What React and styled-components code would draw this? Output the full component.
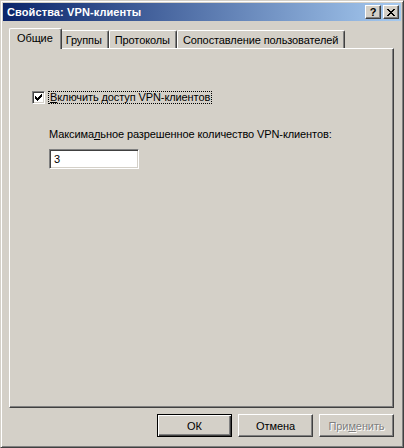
import React from 'react'
import styled, { createGlobalStyle, css } from 'styled-components'

const GlobalStyle = createGlobalStyle`
  html, body {
    margin: 0;
    padding: 0;
    background: #d4d0c8;
  }
  * {
    box-sizing: border-box;
  }
`

const raised = css`
  border-style: solid;
  border-width: 1px;
  border-color: #ffffff #404040 #404040 #ffffff;
  box-shadow: inset -1px -1px #808080, inset 1px 1px #d4d0c8;
`

const sunken = css`
  background: #ffffff;
  border-style: solid;
  border-width: 1px;
  border-color: #808080 #ffffff #ffffff #808080;
  box-shadow: inset 1px 1px #404040, inset -1px -1px #d4d0c8;
`

const Window = styled.div`
  width: 404px;
  height: 448px;
  display: flex;
  flex-direction: column;
  padding: 2px;
  background: #d4d0c8;
  border-style: solid;
  border-width: 1px;
  border-color: #d4d0c8 #404040 #404040 #d4d0c8;
  box-shadow: inset 1px 1px #ffffff, inset -1px -1px #808080;
  font-family: "Liberation Sans", Arial, sans-serif;
  font-size: 11px;
  letter-spacing: -0.1px;
  color: #000;
`

const TitleBar = styled.div`
  height: 18px;
  display: flex;
  align-items: center;
  padding: 0 2px;
  background: linear-gradient(to right, #0a246a 0%, #a6caf0 100%);
`

const Title = styled.div`
  flex: 1;
  padding-left: 2px;
  color: #ffffff;
  font-weight: bold;
  font-size: 11px;
  letter-spacing: 0.1px;
`

const CaptionButton = styled.div`
  ${raised};
  width: 16px;
  height: 14px;
  margin-left: ${p => p.$gap || 0}px;
  background: #d4d0c8;
  display: flex;
  align-items: center;
  justify-content: center;
  font-weight: bold;
  font-size: 11px;
  line-height: 1;
`

const Body = styled.div`
  flex: 1;
  display: flex;
  flex-direction: column;
  padding: 7px 7px 8px 6px;
`

const TabRow = styled.div`
  height: 20px;
  display: flex;
  align-items: flex-end;
  padding-left: 2px;
`

const Tab = styled.div`
  height: 18px;
  padding: 1px 6px 0 5px;
  display: flex;
  align-items: center;
  justify-content: center;
  background: #d4d0c8;
  border-top: 1px solid #ffffff;
  border-left: 1px solid #ffffff;
  border-right: 1px solid #404040;
  border-radius: 2px 2px 0 0;
  box-shadow: inset -1px 0 #808080;
  white-space: nowrap;

  ${p => p.$active && css`
    position: relative;
    z-index: 1;
    height: 21px;
    margin: 0 -2px -1px -2px;
    padding: 0 8px 2px 7px;
  `}
`

const Panel = styled.div`
  flex: 1;
  display: flex;
  flex-direction: column;
  padding: 42px 20px 0 22px;
  border-style: solid;
  border-width: 1px;
  border-color: #ffffff #404040 #404040 #ffffff;
  box-shadow: inset -1px -1px #808080;
`

const CheckRow = styled.label`
  display: flex;
  align-items: center;
  gap: 3px;
`

const CheckBox = styled.span`
  ${sunken};
  width: 13px;
  height: 13px;
  display: flex;
  align-items: center;
  justify-content: center;
`

const FocusLabel = styled.span`
  border: 1px dotted #000;
  padding: 0 1px;
  line-height: 11px;
  height: 13px;
`

const Key = styled.span`
  text-decoration: underline;
`

const Group = styled.div`
  margin: 24px 0 0 17px;
  display: flex;
  flex-direction: column;
  gap: 9px;
`

const Field = styled.div`
  ${sunken};
  width: 90px;
  height: 20px;
  padding: 3px 4px;
  line-height: 13px;
`

const Footer = styled.div`
  height: 23px;
  margin-top: 6px;
  display: flex;
  justify-content: flex-end;
  gap: 6px;
`

const Button = styled.div`
  ${raised};
  width: 75px;
  height: 23px;
  display: flex;
  align-items: center;
  justify-content: center;
  background: #d4d0c8;

  ${p => p.$default && css`
    border-color: #000;
    box-shadow: inset 1px 1px #ffffff, inset -1px -1px #404040, inset -2px -2px #808080;
  `}

  ${p => p.$disabled && css`
    color: #808080;
    text-shadow: 1px 1px #ffffff;
  `}
`

function CloseGlyph() {
  return (
    <svg width="8" height="7" viewBox="0 0 8 7" shapeRendering="crispEdges">
      <path d="M0 0h2v1h-2zM1 1h2v1h-2zM2 2h4v1h-4zM3 3h2v1h-2zM2 4h4v1h-4zM1 5h2v1h-2zM0 6h2v1h-2zM6 0h2v1h-2zM5 1h2v1h-2zM5 5h2v1h-2zM6 6h2v1h-2z" fill="#000" />
    </svg>
  )
}

function CheckGlyph() {
  return (
    <svg width="7" height="7" viewBox="0 0 7 7" shapeRendering="crispEdges">
      <path d="M6 0h1v3h-1zM5 1h1v3h-1zM4 2h1v3h-1zM3 3h1v3h-1zM2 4h1v3h-1zM1 3h1v3h-1zM0 2h1v3h-1z" fill="#000" />
    </svg>
  )
}

const tabs = ['Общие', 'Группы', 'Протоколы', 'Сопоставление пользователей']

export default function App() {
  return (
    <>
      <GlobalStyle />
      <Window>
        <TitleBar>
          <Title>Свойства: VPN-клиенты</Title>
          <CaptionButton>?</CaptionButton>
          <CaptionButton $gap={2}><CloseGlyph /></CaptionButton>
        </TitleBar>
        <Body>
          <TabRow>
            {tabs.map((t, i) => (
              <Tab key={t} $active={i === 0}>{t}</Tab>
            ))}
          </TabRow>
          <Panel>
            <CheckRow>
              <CheckBox><CheckGlyph /></CheckBox>
              <FocusLabel><Key>В</Key>ключить доступ VPN-клиентов</FocusLabel>
            </CheckRow>
            <Group>
              <div>Максима<Key>л</Key>ьное разрешенное количество VPN-клиентов:</div>
              <Field>3</Field>
            </Group>
          </Panel>
          <Footer>
            <Button $default>ОК</Button>
            <Button>Отмена</Button>
            <Button $disabled>При<Key>м</Key>енить</Button>
          </Footer>
        </Body>
      </Window>
    </>
  )
}
